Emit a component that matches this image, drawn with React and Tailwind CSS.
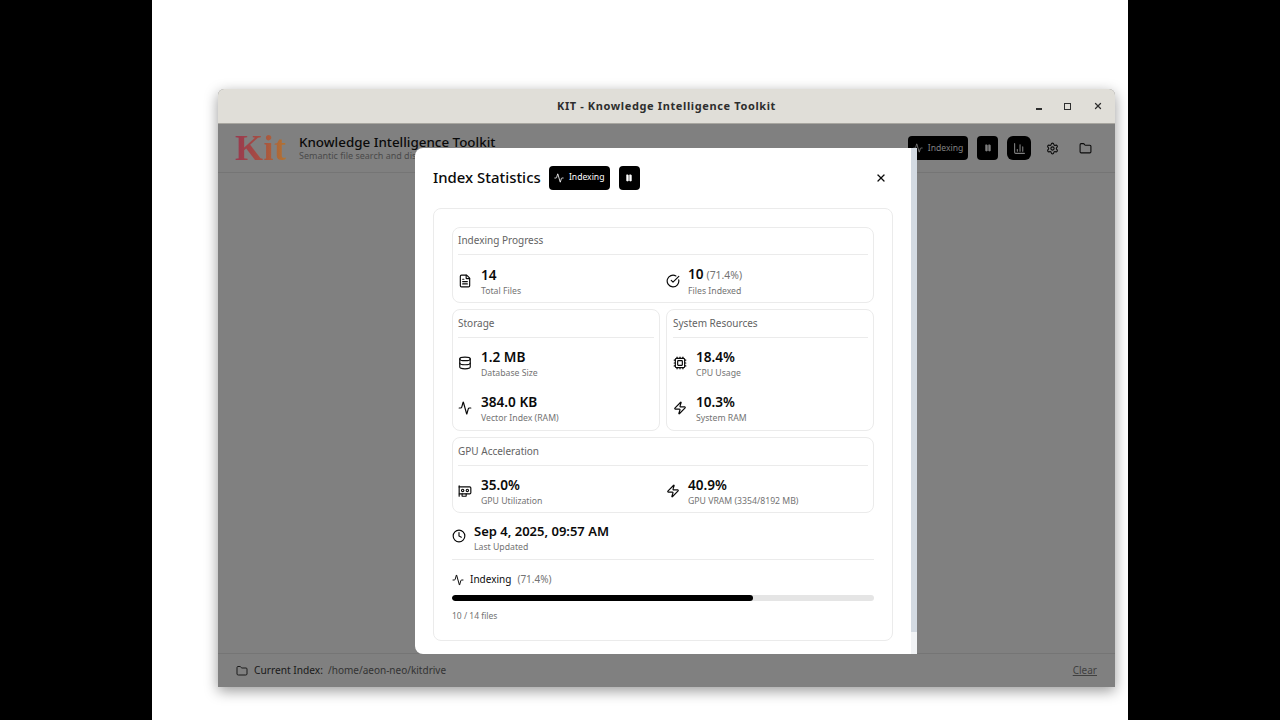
import React from "react";
import {
  Activity,
  ChartColumn,
  CircleCheckBig,
  Clock,
  Cpu,
  Database,
  FileText,
  Folder,
  Gpu,
  Pause,
  Settings,
  X,
  Zap,
} from "lucide-react";

const Stat = ({ icon: Icon, value, note, label, className = "gap-[9px]" }) => (
  <div className={`flex items-center ${className}`}>
    <Icon className="mb-[2px] h-[14px] w-[14px] shrink-0 text-[#0a0a0a]" strokeWidth={2} />
    <div>
      <div className="text-[13.6px] leading-[18px] font-semibold text-[#0a0a0a]">
        {value}
        {note && <span className="ml-[3px] text-[10.4px] font-normal text-[#737373]">{note}</span>}
      </div>
      <div className="text-[8.7px] leading-[14px] text-[#737373]">{label}</div>
    </div>
  </div>
);

const Section = ({ title, children, className = "", headClass = "pt-[5px]" }) => (
  <div className={`rounded-lg border border-[#ebebeb] px-[5px] ${className}`}>
    <div className={`border-b border-[#ebebeb] pb-[5px] text-[10px] leading-[17px] text-[#636363] ${headClass}`}>
      {title}
    </div>
    {children}
  </div>
);

export default function App() {
  return (
    <div className="h-[720px] w-[1280px] overflow-hidden bg-black font-['Noto_Sans',sans-serif]">
      <div className="mx-auto h-[720px] w-[976px] overflow-hidden bg-white pl-[66px] pt-[89px]">
        {/* app window */}
        <div className="relative flex h-[598px] w-[897px] flex-col overflow-hidden rounded-t-[6px] bg-[#808080] shadow-[0_4px_14px_rgba(0,0,0,0.4)]">
          <div className="relative flex h-[35px] shrink-0 items-center justify-center border-b border-[#a8a6a0] bg-[#e0ded8]">
            <span className="text-[11px] font-bold tracking-[0.62px] text-[#2e2e2e]">
              KIT - Knowledge Intelligence Toolkit
            </span>
            <div className="absolute right-[12px] top-0 flex h-[34px] items-center gap-[22px] text-[#2e2e2e]">
              <span className="mt-[6px] h-[2px] w-[6px] bg-[#2e2e2e]" />
              <span className="h-[7px] w-[7px] border-[1.5px] border-[#2e2e2e]" />
              <X className="h-[10px] w-[10px]" strokeWidth={3} />
            </div>
          </div>

          <div className="flex h-[49px] shrink-0 items-center border-b border-[#757575] pl-[17px] pr-[23px]">
            <span className="w-[55px] bg-gradient-to-r from-[#98384f] via-[#a8503f] to-[#b37a2e] bg-clip-text font-['Liberation_Serif',serif] text-[36px] leading-[36px] font-bold tracking-[0.5px] text-transparent">
              Kit
            </span>
            <div className="ml-[9px] flex-1">
              <div className="text-[13.4px] leading-[12px] font-medium text-[#0a0a0a]">
                Knowledge Intelligence Toolkit
              </div>
              <div className="mt-[3px] text-[9px] leading-[10px] text-[#4a4a4a]">Semantic file search and discovery</div>
            </div>
            <div className="flex items-center">
              <div className="flex h-[24px] w-[60px] items-center justify-center gap-[5px] rounded bg-black text-[8.6px] text-[#808080]">
                <Activity className="h-[10px] w-[10px]" />
                Indexing
              </div>
              <div className="ml-[9px] flex h-[24px] w-[21px] items-center justify-center rounded bg-black text-[#808080]">
                <Pause className="h-[8px] w-[8px] fill-current" />
              </div>
              <div className="ml-[9px] flex h-[24px] w-[24px] items-center justify-center rounded-md bg-black text-[#808080]">
                <ChartColumn className="h-[13px] w-[13px]" />
              </div>
              <Settings className="ml-[15px] h-[13px] w-[13px] text-[#0a0a0a]" />
              <Folder className="ml-[20px] h-[13px] w-[13px] text-[#0a0a0a]" />
            </div>
          </div>

          <div className="flex-1" />

          <div className="flex h-[34px] shrink-0 items-center border-t border-[#757575] px-[18px] text-[10.2px] text-[#1a1a1a]">
            <Folder className="h-[12px] w-[12px]" />
            <span className="ml-[6px]">Current Index:</span>
            <span className="ml-[5px] text-[10px] text-[#333333]">/home/aeon-neo/kitdrive</span>
            <span className="ml-auto text-[10px] text-[#404040] underline">Clear</span>
          </div>

          {/* statistics dialog */}
          <div className="absolute left-[197px] top-[59px] h-[506px] w-[502px] overflow-hidden rounded-l-lg bg-white pl-[18px] pr-[24px]">
            <div className="mb-[1px] flex h-[59px] items-center">
              <span className="text-[14.9px] font-medium text-[#0a0a0a]">Index Statistics</span>
              <div className="ml-[8px] flex h-[24px] w-[61px] items-center justify-center gap-[5px] rounded bg-black text-[8.6px] text-white">
                <Activity className="h-[10px] w-[10px]" />
                Indexing
              </div>
              <div className="ml-[9px] flex h-[24px] w-[21px] items-center justify-center rounded bg-black text-white">
                <Pause className="h-[8px] w-[8px] fill-current" />
              </div>
              <X className="ml-auto mr-[6px] h-[12px] w-[12px] text-[#0a0a0a]" strokeWidth={2.5} />
            </div>

            <div className="h-[433px] rounded-lg border border-[#ebebeb] px-[18px] pt-[18px]">
              <Section title="Indexing Progress" className="h-[76px]" headClass="pt-[4px]">
                <div className="grid grid-cols-2 pt-[10px]">
                  <Stat icon={FileText} value="14" label="Total Files" />
                  <Stat icon={CircleCheckBig} value="10" note="(71.4%)" label="Files Indexed" className="gap-[8px] pl-[3px]" />
                </div>
              </Section>

              <div className="mt-[6px] grid grid-cols-2 gap-[6px]">
                <Section title="Storage" className="h-[122px]">
                  <div className="flex flex-col gap-[13px] pt-[10px]">
                    <Stat icon={Database} value="1.2 MB" label="Database Size" />
                    <Stat icon={Activity} value="384.0 KB" label="Vector Index (RAM)" />
                  </div>
                </Section>
                <Section title="System Resources" className="h-[122px] pl-[6px]">
                  <div className="flex flex-col gap-[13px] pt-[10px]">
                    <Stat icon={Cpu} value="18.4%" label="CPU Usage" />
                    <Stat icon={Zap} value="10.3%" label="System RAM" />
                  </div>
                </Section>
              </div>

              <Section title="GPU Acceleration" className="mt-[6px] h-[76px]">
                <div className="grid grid-cols-2 pt-[10px]">
                  <Stat icon={Gpu} value="35.0%" label="GPU Utilization" />
                  <Stat icon={Zap} value="40.9%" label="GPU VRAM (3354/8192 MB)" className="gap-[8px] pl-[3px]" />
                </div>
              </Section>

              <div className="mt-[6px] flex h-[38px] items-center gap-[8px]">
                <Clock className="mb-[5px] h-[14px] w-[14px] text-[#0a0a0a]" strokeWidth={2} />
                <div>
                  <div className="text-[13px] leading-[18px] font-semibold text-[#0a0a0a]">Sep 4, 2025, 09:57 AM</div>
                  <div className="text-[8.7px] leading-[14px] text-[#737373]">Last Updated</div>
                </div>
              </div>

              <div className="mt-[2px] border-t border-[#ebebeb] pt-[12px]">
                <div className="flex h-[15px] items-center text-[10px] text-[#0a0a0a]">
                  <Activity className="h-[12px] w-[12px]" />
                  <span className="ml-[6px]">Indexing</span>
                  <span className="ml-[6px] text-[#737373]">(71.4%)</span>
                </div>
                <div className="mt-[8px] h-[6px] overflow-hidden rounded-full bg-[#e5e5e5]">
                  <div className="h-full w-[71.4%] rounded-full bg-black" />
                </div>
                <div className="mt-[9px] text-[8.5px] leading-[12px] text-[#737373]">10 / 14 files</div>
              </div>
            </div>

            {/* scrollbar */}
            <div className="absolute right-0 top-0 h-full w-[6px] bg-[#f1f3f5]">
              <div className="h-[484px] bg-[#d3dae2]" />
            </div>
          </div>
        </div>
      </div>
    </div>
  );
}
